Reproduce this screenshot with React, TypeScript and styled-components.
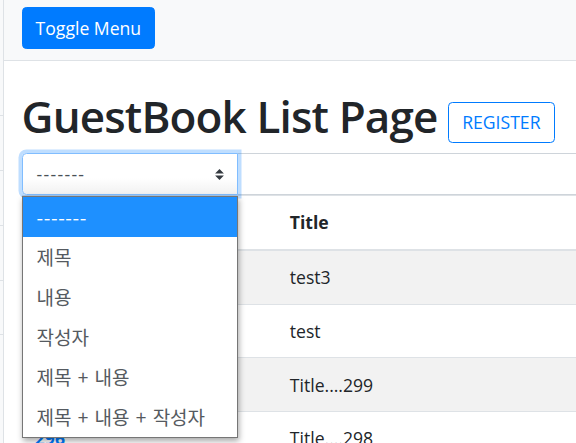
import React from "react";
import styled, { createGlobalStyle } from "styled-components";

const GlobalStyle = createGlobalStyle`
  html, body {
    margin: 0;
    padding: 0;
    overflow: hidden;
    background: #fff;
  }
  body {
    font-family: "Open Sans", "Noto Sans CJK KR", sans-serif;
    font-size: 17.6px;
    line-height: 1.5;
    color: #212529;
  }
  * { box-sizing: border-box; }
`;

const Page = styled.div`
  display: flex;
  width: 900px;
  min-height: 443px;
`;

const Sidebar = styled.div`
  width: 4px;
  flex: none;
  background: #f8f9fa;
  border-right: 1px solid #dee2e6;
  display: flex;
  flex-direction: column;
`;

const SidebarHeading = styled.div`
  height: 115px;
`;

const SidebarItem = styled.div<{ $last?: boolean }>`
  height: 55px;
  border-top: 1px solid #dee2e6;
  border-bottom: ${(p) => (p.$last ? "1px solid #dee2e6" : "none")};
`;

const Main = styled.div`
  flex: 1;
  display: flex;
  flex-direction: column;
`;

const Navbar = styled.nav`
  height: 61px;
  background: #f8f9fa;
  border-bottom: 1px solid #dee2e6;
  padding: 7px 17.6px 0;
  display: flex;
  align-items: flex-start;
`;

const ToggleButton = styled.button`
  font-family: inherit;
  font-size: 17.6px;
  line-height: 1.5;
  height: 42px;
  padding: 0 13px;
  color: #fff;
  background: #007bff;
  border: 1px solid #007bff;
  border-radius: 4.4px;
`;

const Content = styled.div`
  padding: 0 17.6px;
`;

const Title = styled.h1`
  font-size: 44px;
  font-weight: 600;
  line-height: 53px;
  margin: 29px 0 10px;
  color: #212529;
  white-space: nowrap;
  letter-spacing: -0.85px;
`;

const OutlineButton = styled.button`
  font-family: inherit;
  font-size: 17.6px;
  line-height: 1.5;
  height: 41px;
  padding: 0 13px;
  color: #007bff;
  background: transparent;
  border: 1px solid #007bff;
  border-radius: 4.4px;
  vertical-align: 4px;
  letter-spacing: 0;
`;

const SearchGroup = styled.div`
  display: flex;
  height: 42px;
`;

const SelectWrap = styled.div`
  position: relative;
  width: 216px;
  flex: none;
  z-index: 2;
`;

const SelectBox = styled.div<{ $focused?: boolean }>`
  height: 42px;
  display: flex;
  align-items: center;
  justify-content: space-between;
  padding: 0 13px 0 14px;
  color: #495057;
  background: linear-gradient(#fff 60%, #f1f1f1);
  border: 1px solid ${(p) => (p.$focused ? "#80bdff" : "#ced4da")};
  border-radius: 4.4px 0 0 4.4px;
  box-shadow: ${(p) => (p.$focused ? "0 0 0 3.5px rgba(0,123,255,.25)" : "none")};
`;

const Dashes = styled.span<{ $spacing: number }>`
  letter-spacing: ${(p) => p.$spacing}px;
`;

const Dropdown = styled.ul`
  position: absolute;
  left: 0;
  top: 43px;
  width: 216px;
  margin: 0;
  padding: 0;
  list-style: none;
  background: #fff;
  border: 1px solid #767676;
  box-shadow: 1px 3px 6px rgba(0, 0, 0, 0.35);
`;

const Option = styled.li<{ $active?: boolean }>`
  height: 40px;
  display: flex;
  align-items: center;
  padding: 0 14px;
  font-family: "Noto Sans CJK KR", "Open Sans", sans-serif;
  font-size: 19px;
  word-spacing: 2px;
  color: ${(p) => (p.$active ? "#fff" : "#555a60")};
  background: ${(p) => (p.$active ? "#1e90ff" : "#fff")};
  white-space: nowrap;
`;

const KeywordInput = styled.div`
  flex: 1;
  height: 42px;
  margin-left: -1px;
  border: 1px solid #ced4da;
  background: #fff;
`;

const Table = styled.table`
  width: 100%;
  border-collapse: collapse;
  table-layout: fixed;
  color: #212529;
`;

const HeadCell = styled.th<{ $w?: number }>`
  width: ${(p) => (p.$w ? `${p.$w}px` : "auto")};
  text-align: left;
  font-weight: 700;
  padding: 13.2px;
  border-top: 1px solid #dee2e6;
  border-bottom: 2px solid #dee2e6;
  line-height: 26.4px;
`;

const Row = styled.tr<{ $striped?: boolean }>`
  background: ${(p) => (p.$striped ? "#f2f2f2" : "#fff")};
`;

const Cell = styled.td`
  padding: 13.2px;
  border-top: 1px solid #dee2e6;
  line-height: 26.4px;
  white-space: nowrap;
`;

const GnoLink = styled.a`
  color: #007bff;
  font-weight: 700;
  text-decoration: none;
`;

const Arrow = () => (
  <svg width="9" height="11" viewBox="0 0 4 5" aria-hidden="true">
    <path fill="#343a40" d="M2 0L0 2h4zm0 5L0 3h4z" />
  </svg>
);

const options = ["제목", "내용", "작성자", "제목 + 내용", "제목 + 내용 + 작성자"];

const rows = [
  { gno: 302, title: "test3", writer: "user0", date: "2021/03/02" },
  { gno: 301, title: "test", writer: "user0", date: "2021/03/02" },
  { gno: 299, title: "Title....299", writer: "user9", date: "2021/03/01" },
  { gno: 296, title: "Title....298", writer: "user8", date: "2021/03/01" },
];

export default function App() {
  return (
    <>
      <GlobalStyle />
      <Page>
        <Sidebar>
          <SidebarHeading />
          <SidebarItem />
          <SidebarItem />
          <SidebarItem />
          <SidebarItem $last />
        </Sidebar>
        <Main>
          <Navbar>
            <ToggleButton>Toggle Menu</ToggleButton>
          </Navbar>
          <Content>
            <Title>
              GuestBook List Page <OutlineButton>REGISTER</OutlineButton>
            </Title>
            <SearchGroup>
              <SelectWrap>
                <SelectBox $focused>
                  <Dashes $spacing={1.3}>-------</Dashes>
                  <Arrow />
                </SelectBox>
                <Dropdown>
                  <Option $active>
                    <Dashes $spacing={0.6}>-------</Dashes>
                  </Option>
                  {options.map((o) => (
                    <Option key={o}>{o}</Option>
                  ))}
                </Dropdown>
              </SelectWrap>
              <KeywordInput />
            </SearchGroup>
            <Table>
              <thead>
                <tr>
                  <HeadCell $w={255}>Gno</HeadCell>
                  <HeadCell $w={360}>Title</HeadCell>
                  <HeadCell>Writer</HeadCell>
                  <HeadCell>Regdate</HeadCell>
                </tr>
              </thead>
              <tbody>
                {rows.map((r, i) => (
                  <Row key={r.gno} $striped={i % 2 === 0}>
                    <Cell>
                      <GnoLink href="#">{r.gno}</GnoLink>
                    </Cell>
                    <Cell>{r.title}</Cell>
                    <Cell>{r.writer}</Cell>
                    <Cell>{r.date}</Cell>
                  </Row>
                ))}
              </tbody>
            </Table>
          </Content>
        </Main>
      </Page>
    </>
  );
}
